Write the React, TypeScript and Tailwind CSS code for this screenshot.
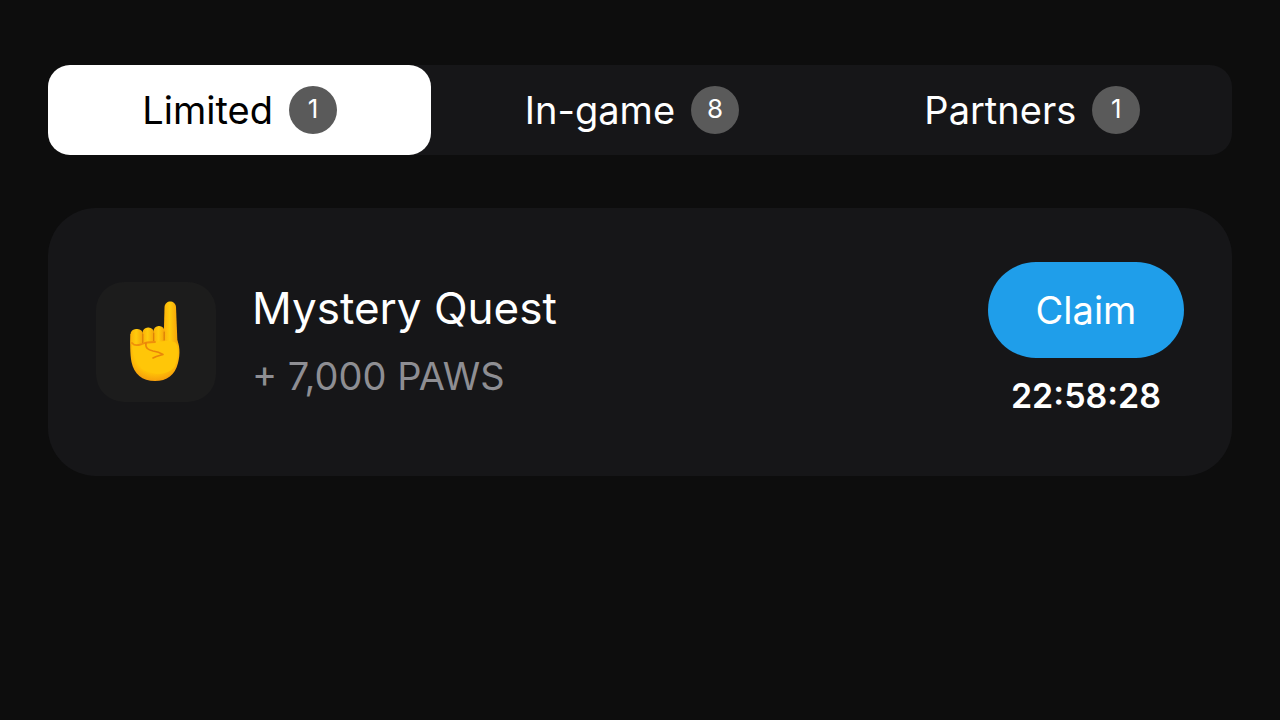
type Tab = { label: string; count: number; active?: boolean };

const tabs: Tab[] = [
  { label: "Limited", count: 1, active: true },
  { label: "In-game", count: 8 },
  { label: "Partners", count: 1 },
];

function PointingHand() {
  return (
    <svg viewBox="0 0 120 120" className="size-full" role="img" aria-label="Pointing up">
      <defs>
        <radialGradient id="palm" cx="0.5" cy="0.4" r="0.62">
          <stop offset="0" stopColor="#ffcf0a" />
          <stop offset="0.7" stopColor="#ffc107" />
          <stop offset="1" stopColor="#f59a0c" />
        </radialGradient>
        <linearGradient id="finger" x1="0" y1="0" x2="1" y2="0">
          <stop offset="0" stopColor="#fbb008" />
          <stop offset="0.45" stopColor="#ffcb0c" />
          <stop offset="1" stopColor="#f6a40a" />
        </linearGradient>
      </defs>
      <path
        d="M34.500 52 L80 56 C84 62 84.500 72 82 81 C79 93 71 99 59 99 C46 99 38 92 35.500 80 C34 72 34 60 34.500 52 Z"
        fill="url(#palm)"
      />
      <path d="M67.500 64 L68.500 25 C69 17.500 79.500 17.500 80 25 L81.500 62 Z" fill="url(#finger)" />
      <rect x="34.500" y="47" width="12.500" height="19" rx="5.500" fill="url(#finger)" />
      <rect x="46.500" y="45.500" width="11.500" height="18" rx="5.500" fill="url(#finger)" />
      <rect x="57.500" y="44" width="11" height="18" rx="5.200" fill="url(#finger)" />
      <path
        d="M46.800 52 V61 M57.700 51 V59 M68.200 50 V58"
        fill="none"
        stroke="#db7d08"
        strokeWidth="1.200"
        strokeLinecap="round"
      />
      <path
        d="M36 61 C40 64 45 62 47 61 C50 59 55 60 59 59.500 C67 60 74 57 80 61 C83 67 82 76 79 84 C75 91 64 94 52 90 C42 87 36 75 36 61 Z"
        fill="#ffc608"
      />
      <path
        d="M36 61 C39 65 43 63 46 62 C50 60 55 60 59 60"
        fill="none"
        stroke="#ef8e0b"
        strokeWidth="1.800"
        strokeLinecap="round"
      />
      <path
        d="M50 61 C49 66 52 68 57 69 C61 69.500 64 70.500 67 72.500 C63 73.500 60 74 57 76"
        fill="none"
        stroke="#e9860a"
        strokeWidth="1.600"
        strokeLinecap="round"
        strokeLinejoin="round"
      />
    </svg>
  );
}

export default function App() {
  return (
    <main className="min-h-screen bg-[#0d0d0d] px-12 pt-[65px] font-[Inter,sans-serif] text-white">
      <nav className="grid grid-cols-[382fr_400fr_398fr] rounded-[22px] bg-[#161618]">
        {tabs.map((tab) => (
          <button
            key={tab.label}
            type="button"
            className={`flex h-[90px] items-center justify-center gap-4 rounded-[22px] text-[38px] ${
              tab.active ? "bg-white text-black" : "text-white"
            }`}
          >
            <span>{tab.label}</span>
            <span className="flex size-12 items-center justify-center rounded-full bg-[#5a5a5a] pb-1 text-[26px] text-white">
              {tab.count}
            </span>
          </button>
        ))}
      </nav>

      <section className="mt-[53px] flex h-[268px] items-center rounded-[48px] bg-[#161618] px-12">
        <div className="size-[120px] shrink-0 rounded-[28px] bg-[#1c1c1c]">
          <PointingHand />
        </div>
        <div className="ml-9 flex-1">
          <h2 className="text-[44px] leading-[60px]">Mystery Quest</h2>
          <p className="mt-2 text-[38px] leading-[60px] text-[#8e8e93]">+ 7,000 PAWS</p>
        </div>
        <div className="flex flex-col items-center pb-1">
          <button
            type="button"
            className="h-24 w-[196px] rounded-full bg-[#1f9eea] text-[38px] text-white"
          >
            Claim
          </button>
          <time className="mt-4 text-[34px] leading-[44px] font-semibold">22:58:28</time>
        </div>
      </section>
    </main>
  );
}
